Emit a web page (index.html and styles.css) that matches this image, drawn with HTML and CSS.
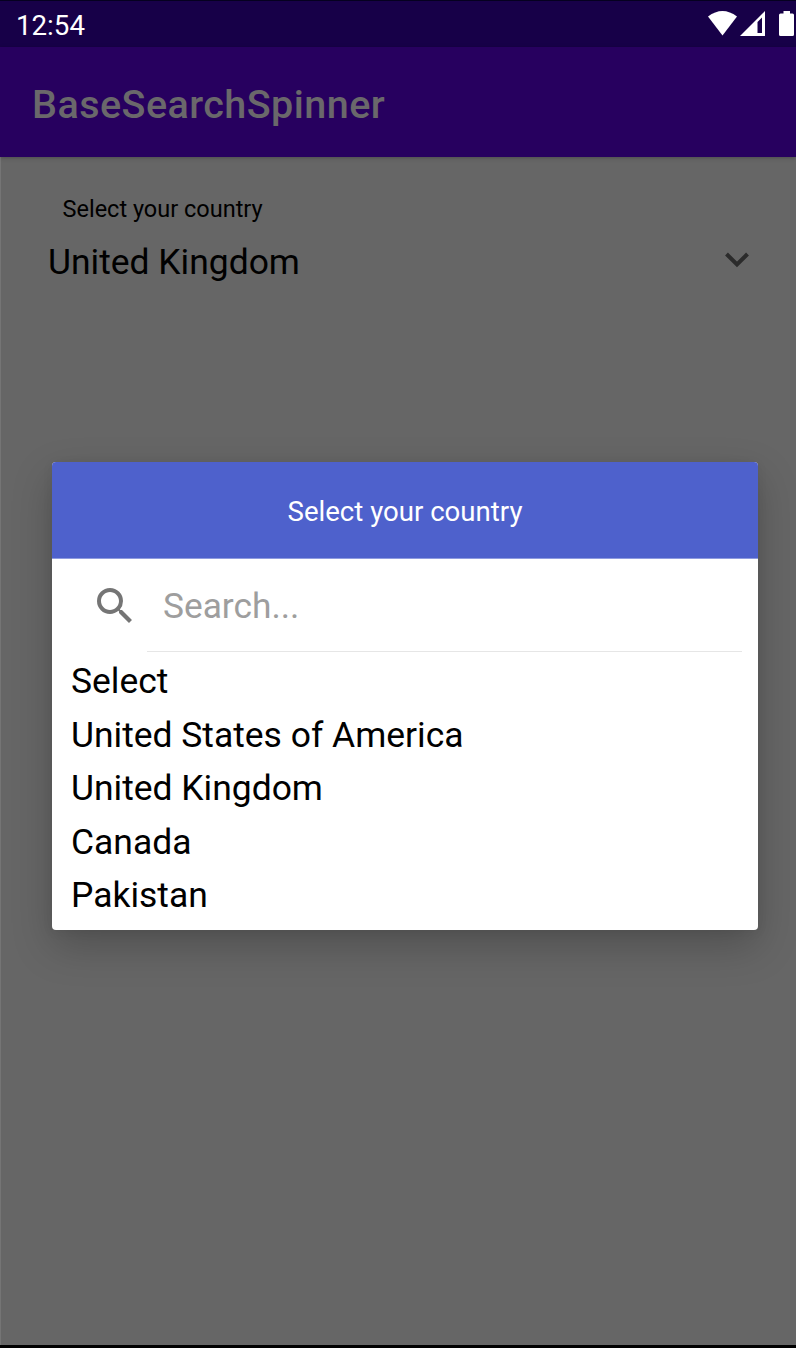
FILE: index.html
```html
<!DOCTYPE html>
<html lang="en">
<head>
<meta charset="utf-8">
<title>BaseSearchSpinner</title>
<link rel="stylesheet" href="styles.css">
</head>
<body>
<div class="screen">
  <div class="status-bar">
    <span class="clock">12:54</span>
    <svg class="status-icons" width="88" height="28" viewBox="0 0 88 28" fill="#fff">
      <path d="M0 6.5Q14.5-4.500 29 6.500L14.500 25.500Z"/>
      <path fill-rule="evenodd" d="M57 1V26H32ZM49.500 12V23H54V7.500Z"/>
      <path d="M75.500 1H82V3.500H84.500Q86 3.500 86 5V24.500Q86 26 84.500 26H72.500Q71 26 71 24.500V5Q71 3.500 72.500 3.500H75.500Z"/>
    </svg>
  </div>
  <header class="app-bar"><h1 class="app-title">BaseSearchSpinner</h1></header>
  <main class="content">
    <div class="field-label"><span>Select your country</span></div>
    <div class="spinner">
      <span class="spinner-value">United Kingdom</span>
      <svg class="chevron" width="24" height="16" viewBox="0 0 24 16"><path d="M1.500 2L12 12.500L22.500 2" fill="none" stroke="#2b2b2b" stroke-width="4"/></svg>
    </div>
  </main>
  <div class="nav-edge"></div>
  <section class="dialog">
    <h2 class="dialog-title"><span>Select your country</span></h2>
    <div class="search">
      <svg class="search-icon" width="35" height="35" viewBox="3 3 17.500 17.500" fill="#757575"><path d="M15.500 14h-.79l-.28-.27A6.470 6.470 0 0 0 16 9.500 6.500 6.500 0 1 0 9.500 16c1.610 0 3.090-.59 4.230-1.570l.27.28v.79l5 4.990L20.490 19l-4.990-5zm-6 0C7.010 14 5 11.990 5 9.500S7.010 5 9.500 5 14 7.010 14 9.500 11.990 14 9.500 14z"/></svg>
      <div class="search-field"><span>Search...</span></div>
    </div>
    <ul class="options">
      <li>Select</li>
      <li>United States of America</li>
      <li>United Kingdom</li>
      <li>Canada</li>
      <li>Pakistan</li>
    </ul>
  </section>
</div>
</body>
</html>
```
FILE: styles.css
```css
* { box-sizing: border-box; }
body { margin: 0; font-family: Roboto, sans-serif; }
.screen {
  position: relative;
  display: flex;
  flex-direction: column;
  width: 796px;
  height: 1348px;
  overflow: hidden;
  background: #666;
  box-shadow: inset 1px 0 rgba(255, 255, 255, .1);
}
.status-bar {
  display: flex;
  justify-content: space-between;
  align-items: flex-start;
  height: 47px;
  padding: 9px 0 0 16px;
  background: #170048;
  border-top: 1px solid #050020;
  color: #fff;
}
.clock { font-size: 27.700px; line-height: 31px; }
.status-icons { display: block; }
.app-bar {
  display: flex;
  align-items: center;
  height: 110px;
  padding: 6px 32px 0;
  background: #27005f;
  box-shadow: 0 1px 4px rgba(0, 0, 0, .25);
}
.app-title { margin: 0; font-size: 39.500px; line-height: 48px; font-weight: 500; letter-spacing: .45px; color: #6a686b; }
.content { flex: 1; padding: 38px 47px 0 48px; }
.field-label { padding-left: 14.500px; font-size: 23.500px; line-height: 28px; }
.spinner { display: flex; align-items: center; justify-content: space-between; margin-top: 18px; }
.spinner-value { font-size: 35.450px; line-height: 42px; }
.chevron { display: block; margin-bottom: 4px; }
.nav-edge { height: 3px; background: #000; }
.dialog {
  position: absolute;
  top: 462px;
  left: 52px;
  width: 706px;
  height: 468px;
  overflow: hidden;
  border-radius: 4px;
  background: #fff;
  box-shadow: 0 16px 40px rgba(0, 0, 0, .22), 0 2px 12px rgba(0, 0, 0, .06);
}
.dialog-title {
  display: flex;
  align-items: center;
  justify-content: center;
  height: 97px;
  margin: 0;
  padding-top: 2px;
  background: #4e61cc;
  border-bottom: 1px solid #8e9bdf;
  color: #fff;
  font-size: 27.600px;
  font-weight: 400;
}
.search { display: flex; align-items: flex-start; height: 93px; padding: 0 16px 0 45px; }
.search-icon { margin-top: 29px; }
.search-field {
  flex: 1;
  height: 93px;
  margin-left: 15px;
  padding: 26px 16px 0;
  border-bottom: 1px solid #e6e6e6;
  color: #9e9e9e;
  font-size: 35.300px;
  line-height: 42px;
}
.options { margin: 0; padding: 3.400px 19px 0; list-style: none; font-size: 35.450px; line-height: 53.400px; }
```
